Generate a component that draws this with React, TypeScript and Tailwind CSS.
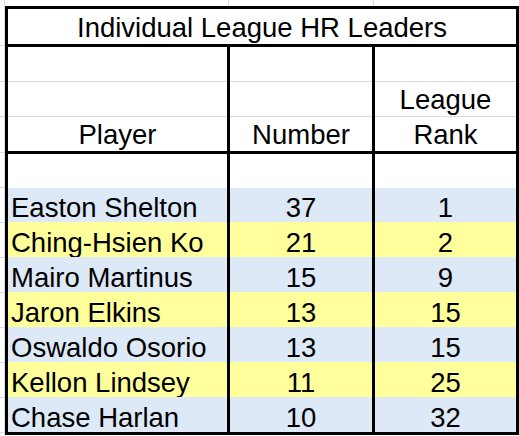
import React from 'react'

type Row = { name: string; hr: number; rank: number }

const rows: Row[] = [
  { name: 'Easton Shelton', hr: 37, rank: 1 },
  { name: 'Ching-Hsien Ko', hr: 21, rank: 2 },
  { name: 'Mairo Martinus', hr: 15, rank: 9 },
  { name: 'Jaron Elkins', hr: 13, rank: 15 },
  { name: 'Oswaldo Osorio', hr: 13, rank: 15 },
  { name: 'Kellon Lindsey', hr: 11, rank: 25 },
  { name: 'Chase Harlan', hr: 10, rank: 32 },
]

// sheet gridline heights down the left margin
const marginRows = [40, 36, 35, 36, 35, 35, 35, 35, 35, 35, 35, 35]

function HeaderCol({ lines, className }: { lines: string[]; className: string }) {
  return (
    <div className={`flex flex-col ${className}`}>
      <div className="h-[35px] border-b border-[#dadada] flex items-end justify-center pb-[3px]">{lines[0]}</div>
      <div className="h-[35px] border-b border-[#dadada] flex items-end justify-center pb-[3px]">{lines[1]}</div>
      <div className="h-[34px] flex items-end justify-center pb-[3px]">{lines[2]}</div>
    </div>
  )
}

export default function App() {
  return (
    <div
      className="w-[519px] h-[436px] bg-white text-black text-[27.5px] leading-none overflow-hidden"
      style={{ fontFamily: '"Liberation Sans", Arial, sans-serif' }}
    >
      {/* top margin gridlines */}
      <div className="flex h-[6px]">
        <div className="w-[5px] border-r border-[#dadada]" />
        <div className="w-[224px] border-r border-[#dadada]" />
        <div className="w-[145px] border-r border-[#dadada]" />
      </div>

      <div className="flex">
        {/* left margin gridlines */}
        <div className="w-[5px] flex flex-col border-r border-[#dadada]">
          {marginRows.map((h, i) => (
            <div key={i} className="border-b border-[#dadada]" style={{ height: h }} />
          ))}
        </div>

        <div className="w-[514px] border-[3px] border-black flex flex-col">
          <div className="h-[38px] border-b-[3px] border-black flex items-end justify-center pb-[3px]">
            Individual League HR Leaders
          </div>

          <div className="flex border-b-[3px] border-black">
            <HeaderCol lines={['', '', 'Player']} className="w-[222px] border-r-[3px] border-black" />
            <HeaderCol lines={['', '', 'Number']} className="w-[145px] border-r-[3px] border-black" />
            <HeaderCol lines={['', 'League', 'Rank']} className="flex-1" />
          </div>

          <div className="flex h-[34px]">
            <div className="w-[222px] border-r-[3px] border-black" />
            <div className="w-[145px] border-r-[3px] border-black" />
            <div className="flex-1" />
          </div>

          {rows.map((r, i) => (
            <div
              key={r.name}
              className={`flex ${i === 0 ? 'h-[34px]' : 'h-[35px]'} ${i % 2 === 0 ? 'bg-[#dde9f6]' : 'bg-[#ffff9c]'}`}
            >
              <div className="w-[222px] border-r-[3px] border-black flex items-end pl-[3px] pb-[1px]">{r.name}</div>
              <div className="w-[145px] border-r-[3px] border-black flex items-end justify-center pb-[1px]">{r.hr}</div>
              <div className="flex-1 flex items-end justify-center pb-[1px]">{r.rank}</div>
            </div>
          ))}
        </div>
      </div>
    </div>
  )
}
